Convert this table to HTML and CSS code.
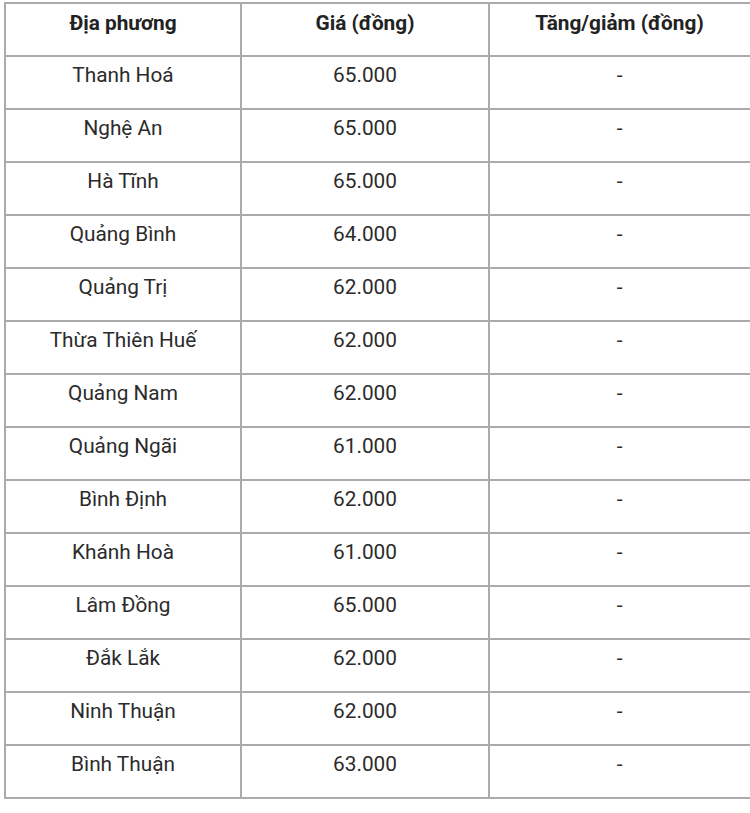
FILE: index.html
```html
<!DOCTYPE html>
<html lang="vi">
<head>
<meta charset="utf-8">
<title>Giá</title>
<link rel="stylesheet" href="styles.css">
</head>
<body>
<table class="price-table">
  <colgroup>
    <col class="c1"><col class="c2"><col class="c3">
  </colgroup>
  <thead>
    <tr><th>Địa phương</th><th>Giá (đồng)</th><th class="last">Tăng/giảm (đồng)</th></tr>
  </thead>
  <tbody>
    <tr><td>Thanh Hoá</td><td>65.000</td><td class="last">-</td></tr>
    <tr><td>Nghệ An</td><td>65.000</td><td class="last">-</td></tr>
    <tr><td>Hà Tĩnh</td><td>65.000</td><td class="last">-</td></tr>
    <tr><td>Quảng Bình</td><td>64.000</td><td class="last">-</td></tr>
    <tr><td>Quảng Trị</td><td>62.000</td><td class="last">-</td></tr>
    <tr><td>Thừa Thiên Huế</td><td>62.000</td><td class="last">-</td></tr>
    <tr><td>Quảng Nam</td><td>62.000</td><td class="last">-</td></tr>
    <tr><td>Quảng Ngãi</td><td>61.000</td><td class="last">-</td></tr>
    <tr><td>Bình Định</td><td>62.000</td><td class="last">-</td></tr>
    <tr><td>Khánh Hoà</td><td>61.000</td><td class="last">-</td></tr>
    <tr><td>Lâm Đồng</td><td>65.000</td><td class="last">-</td></tr>
    <tr><td>Đắk Lắk</td><td>62.000</td><td class="last">-</td></tr>
    <tr><td>Ninh Thuận</td><td>62.000</td><td class="last">-</td></tr>
    <tr><td>Bình Thuận</td><td>63.000</td><td class="last">-</td></tr>
  </tbody>
</table>
</body>
</html>
```

FILE: styles.css
```css
html, body {
  margin: 0;
  padding: 0;
  background: #fff;
  overflow: hidden;
}
body {
  padding: 2px 0 0 4px;
  font-family: Roboto, "Noto Sans", Arial, sans-serif;
  color: #2b2b2b;
}
.price-table {
  border-collapse: collapse;
  table-layout: fixed;
  width: 760px;
}
.c1 { width: 236px; }
.c2 { width: 248px; }
.c3 { width: 276px; }
.price-table th,
.price-table td {
  border: 2px solid #ababab;
  text-align: center;
  font-size: 20.8px;
  line-height: 28px;
  vertical-align: top;
}
.price-table th {
  font-weight: 700;
  color: #222;
  padding: 5px 8px 18px;
}
.price-table td {
  font-weight: 400;
  padding: 4px 8px 19px;
}
.price-table .last {
  padding-right: 23px;
}
```
